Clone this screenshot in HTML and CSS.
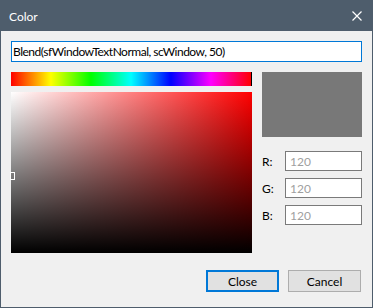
FILE: index.html
```html
<!DOCTYPE html>
<html>
<head>
    <title>Color</title>
    <link rel="stylesheet" href="styles.css">
</head>
<body>
    <div class="window">
        <div class="titlebar">
            <span class="title">Color</span>
            <svg class="close-icon" width="10" height="10" viewBox="0 0 10 10">
                <path d="M0.5 0.5 L9.5 9.5 M9.5 0.5 L0.5 9.5" stroke="#fff" stroke-width="1.2" fill="none"/>
            </svg>
        </div>
        <div class="content">
            <input type="text" class="expr-input" value="Blend(sfWindowTextNormal, scWindow, 50)">

            <div class="picker-row">
                <div class="picker-left">
                    <div class="hue-bar"></div>
                    <div class="sat-box">
                        <div class="sat-marker"></div>
                    </div>
                </div>
                <div class="picker-right">
                    <div class="preview"></div>
                    <div class="channels">
                        <div class="channel">
                            <label>R:</label>
                            <input type="text" value="120" disabled>
                        </div>
                        <div class="channel">
                            <label>G:</label>
                            <input type="text" value="120" disabled>
                        </div>
                        <div class="channel">
                            <label>B:</label>
                            <input type="text" value="120" disabled>
                        </div>
                    </div>
                </div>
            </div>

            <div class="button-group">
                <button class="btn default">Close</button>
                <button class="btn">Cancel</button>
            </div>
        </div>
    </div>
</body>
</html>
```
FILE: styles.css
```css
body {
    margin: 0;
    font-family: Lato, 'Liberation Sans', sans-serif;
    font-size: 12px;
    color: #000;
}
.window {
    width: 373px;
    height: 308px;
    box-sizing: border-box;
    border: 1px solid #4e5d6c;
    background-color: #f0f0f0;
}
.titlebar {
    height: 30px;
    background-color: #4e5d6c;
    display: flex;
    align-items: center;
    justify-content: space-between;
    padding: 0 10px 0 8px;
}
.title {
    color: #fff;
    font-size: 12px;
}
.close-icon {
    display: block;
}
.content {
    padding: 10px 10px 0 10px;
}
.expr-input {
    display: block;
    width: 351px;
    height: 21px;
    box-sizing: border-box;
    border: 1px solid #0078d7;
    padding: 0 1px;
    margin: 0;
    font-family: inherit;
    font-size: 12px;
    letter-spacing: -0.5px;
    color: #000;
    background: #fff;
    outline: none;
}
.picker-row {
    display: flex;
    gap: 10px;
    margin-top: 10px;
}
.picker-left {
    width: 241px;
    display: flex;
    flex-direction: column;
    gap: 6px;
}
.hue-bar {
    height: 14px;
    box-sizing: border-box;
    border-right: 1px solid #000;
    background: linear-gradient(to right, #f00 0%, #ff0 16.6%, #0f0 33.3%, #0ff 50%, #00f 66.6%, #f0f 83.3%, #f00 100%);
}
.sat-box {
    position: relative;
    height: 161px;
    background:
        linear-gradient(to bottom, rgba(0,0,0,0), #000),
        linear-gradient(to right, #fff, #f00);
}
.sat-marker {
    position: absolute;
    left: -1px;
    top: 80px;
    width: 3px;
    height: 6px;
    border: 1px solid #fff;
}
.picker-right {
    width: 100px;
}
.preview {
    height: 65px;
    background-color: #787878;
}
.channels {
    margin-top: 14px;
    display: flex;
    flex-direction: column;
    gap: 7px;
}
.channel {
    display: flex;
    align-items: center;
    justify-content: space-between;
}
.channel label {
    font-size: 12px;
}
.channel input {
    width: 77px;
    height: 20px;
    box-sizing: border-box;
    border: 1px solid #7a7a7a;
    background: #fff;
    padding: 0 4px;
    margin: 0;
    font-family: inherit;
    font-size: 12px;
    color: #a0a0a0;
}
.button-group {
    display: flex;
    justify-content: flex-end;
    gap: 9px;
    margin-top: 17px;
    padding-right: 1px;
}
.btn {
    width: 73px;
    height: 22px;
    box-sizing: border-box;
    border: 1px solid #adadad;
    background-color: #e1e1e1;
    font-family: inherit;
    font-size: 12px;
    color: #000;
    padding: 0;
}
.btn.default {
    border: 2px solid #0078d7;
}
```
